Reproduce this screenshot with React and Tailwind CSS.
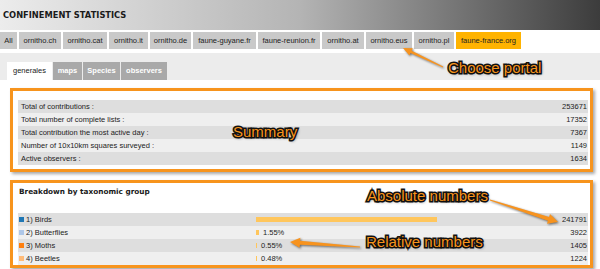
import React from 'react'

const PORTALS = [
  { label: 'All', w: 'w-[17px]' },
  { label: 'ornitho.ch', w: 'w-[42px]' },
  { label: 'ornitho.cat', w: 'w-[44px]' },
  { label: 'ornitho.it', w: 'w-[39px]' },
  { label: 'ornitho.de', w: 'w-[41px]' },
  { label: 'faune-guyane.fr', w: 'w-[63px]' },
  { label: 'faune-reunion.fr', w: 'w-[62px]' },
  { label: 'ornitho.at', w: 'w-[42px]' },
  { label: 'ornitho.eus', w: 'w-[46px]' },
  { label: 'ornitho.pl', w: 'w-[40px]' },
  { label: 'faune-france.org', w: 'w-[65px]', active: true },
]

const SUBTABS = [
  { label: 'generales', w: 'w-[45px]', active: true },
  { label: 'maps', w: 'w-[29px]' },
  { label: 'Species', w: 'w-[37px]' },
  { label: 'observers', w: 'w-[46px]' },
]

const SUMMARY = [
  ['Total of contributions :', '253671'],
  ['Total number of complete lists :', '17352'],
  ['Total contribution the most active day :', '7367'],
  ['Number of 10x10km squares surveyed :', '1149'],
  ['Active observers :', '1634'],
]

const GROUPS = [
  { label: '1) Birds', color: 'bg-[#1f77b4]', pct: 95.3, showPct: false, value: '241791' },
  { label: '2) Butterflies', color: 'bg-[#aec7e8]', pct: 1.55, showPct: true, value: '3922' },
  { label: '3) Moths', color: 'bg-[#ff7f0e]', pct: 0.55, showPct: true, value: '1405' },
  { label: '4) Beetles', color: 'bg-[#ffbb78]', pct: 0.48, showPct: true, value: '1224' },
]

const note =
  "absolute font-['Liberation_Sans',Arial,sans-serif] text-[15px] leading-[15px] text-[#f7941d] whitespace-nowrap [-webkit-text-stroke:3px_#141414] [paint-order:stroke_fill] [text-shadow:1px_1px_3px_rgba(0,0,0,0.8)]"

function Arrows() {
  return (
    <svg
      className="absolute left-0 top-0 pointer-events-none [filter:drop-shadow(1px_1px_1px_rgba(0,0,0,0.55))]"
      width="600"
      height="269"
      viewBox="0 0 600 269"
    >
      <g fill="#f7931e">
        <polygon points="443.2,66.5 411.7,50.7 412.8,48.3 403,48 409.4,55.5 410.5,53.1 442.8,67.5" />
        <polygon points="490.2,199.5 549.1,217 550,214.1 558,222 547,223.7 547.9,220.8 489.8,200.5" />
        <polygon points="360,246.4 300.1,240.7 300.4,237.7 290,242 299.6,247.7 299.9,244.7 360,247.6" />
      </g>
    </svg>
  )
}

export default function App() {
  return (
    <div className="relative w-[600px] h-[269px] overflow-hidden bg-white text-[#222] font-['Liberation_Sans',Arial,sans-serif] text-[7.5px]">
      {/* header */}
      <div className="h-[30px] flex items-center pl-[3px] bg-[linear-gradient(to_right,#ececec,#b4b4b4_50%,#3c3c3c)]">
        <span className="font-['DejaVu_Sans',sans-serif] font-bold text-[8.3px] text-[#1a1a1a]">CONFINEMENT STATISTICS</span>
      </div>

      {/* portals */}
      <div className="mt-[2px] flex gap-[2px] h-[17px]">
        {PORTALS.map((p) => (
          <div
            key={p.label}
            className={`${p.w} flex items-center justify-center whitespace-nowrap ${
              p.active ? 'bg-[#ffb300]' : 'bg-[#c9c9c9]'
            }`}
          >
            {p.label}
          </div>
        ))}
      </div>

      {/* sub tabs */}
      <div className="mt-[4px] bg-[#ececec] pt-[9px] pl-[7px] flex gap-[1px]">
        {SUBTABS.map((t) => (
          <div
            key={t.label}
            className={`${t.w} h-[18px] flex items-center justify-center ${
              t.active ? 'bg-white' : 'bg-[#a9a9a9] text-white font-bold'
            }`}
          >
            {t.label}
          </div>
        ))}
      </div>

      {/* content */}
      <div className="pt-[8px] pl-[10px]">
        <div className="w-[583px] h-[84px] border-[3px] border-[#f7941d] shadow-[2px_2px_3px_rgba(0,0,0,0.35)] pt-[9px] pl-[5px] pr-[2px]">
          {SUMMARY.map(([label, value], i) => (
            <div
              key={label}
              className={`h-[13px] flex items-center justify-between pl-[3px] pr-[1px] ${
                i % 2 === 0 ? 'bg-[#dedede]' : 'bg-[#efefef]'
              }`}
            >
              <span>{label}</span>
              <span>{value}</span>
            </div>
          ))}
        </div>

        <div className="mt-[8px] w-[583px] h-[88px] border-[3px] border-[#f7941d] shadow-[2px_2px_3px_rgba(0,0,0,0.35)] pl-[5px] pr-[2px]">
          <div className="h-[30px] pt-[4px] pl-[1px] font-['DejaVu_Sans',sans-serif] font-bold text-[7.3px] text-[#1a1a1a]">
            Breakdown by taxonomic group
          </div>
          {GROUPS.map((g, i) => (
            <div
              key={g.label}
              className={`h-[13px] flex items-center pl-[1px] pr-[1px] ${
                i % 2 === 0 ? 'bg-[#dedede]' : 'bg-[#efefef]'
              }`}
            >
              <div className="w-[237px] flex items-center gap-[2px]">
                <span className={`w-[5px] h-[5px] ${g.color}`} />
                <span>{g.label}</span>
              </div>
              <div className="flex-1 flex items-center gap-[4px]">
                <div
                  className="h-[5px] bg-[#ffc65c]"
                  style={{ width: Math.max(1, Math.round((g.pct / 100) * 190)) }}
                />
                {g.showPct && <span>{g.pct.toFixed(2)}%</span>}
              </div>
              <span>{g.value}</span>
            </div>
          ))}
        </div>
      </div>

      {/* annotations */}
      <Arrows />
      <div className={`${note} left-[448px] top-[60px]`}>Choose portal</div>
      <div className={`${note} left-[233px] top-[124px]`}>Summary</div>
      <div className={`${note} left-[367px] top-[188px]`}>Absolute numbers</div>
      <div className={`${note} left-[366px] top-[234px]`}>Relative numbers</div>
    </div>
  )
}
